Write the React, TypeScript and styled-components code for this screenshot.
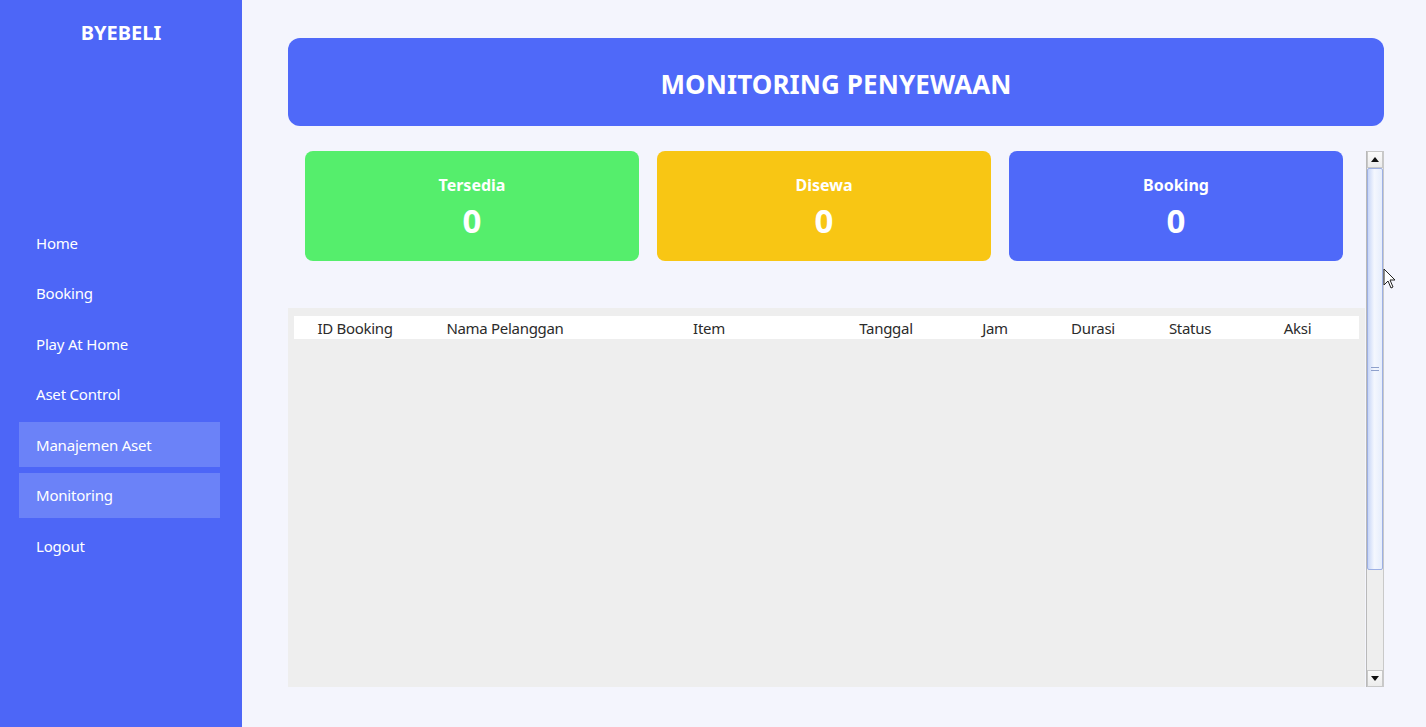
import React from "react";
import styled, { createGlobalStyle } from "styled-components";

const Global = createGlobalStyle`
  html, body { margin: 0; padding: 0; background: #f4f5fd; }
  body { font-family: "Noto Sans", "Open Sans", sans-serif; }
  * { box-sizing: border-box; }
`;

const Shell = styled.div`
  display: flex;
  width: 1426px;
  height: 727px;
  overflow: hidden;
  position: relative;
  background: #f4f5fd;
`;

const Sidebar = styled.aside`
  width: 242px;
  flex: none;
  background: #4d66f7;
  display: flex;
  flex-direction: column;
  padding: 19px 22px 0 19px;
`;

const Brand = styled.div`
  color: #fff;
  font-weight: 700;
  font-size: 20px;
  text-align: center;
  line-height: 28px;
  padding-left: 3px;
  margin-bottom: 173px;
`;

const Menu = styled.nav`
  display: flex;
  flex-direction: column;
  gap: 5.6px;
`;

const MenuItem = styled.div<{ $active?: boolean }>`
  height: 45px;
  display: flex;
  align-items: center;
  padding-left: 17px;
  color: #fff;
  font-size: 15px;
  letter-spacing: -0.2px;
  background: ${(p) => (p.$active ? "#6b82f8" : "transparent")};
`;

const Main = styled.main`
  flex: 1;
  display: flex;
  flex-direction: column;
  padding: 38px 42px 0 46px;
`;

const Header = styled.header`
  height: 88px;
  border-radius: 12px;
  background: #4f69f9;
  display: flex;
  align-items: center;
  justify-content: center;
  padding-top: 4px;
  color: #fff;
  font-weight: 700;
  font-size: 26px;
  letter-spacing: 0.1px;
`;

const ScrollPane = styled.div`
  margin-top: 25px;
  display: flex;
  height: 536px;
`;

const Content = styled.div`
  width: 1077px;
  display: flex;
  flex-direction: column;
`;

const Cards = styled.div`
  display: grid;
  grid-template-columns: repeat(3, 334px);
  gap: 18px;
  padding-left: 17px;
`;

const Card = styled.div<{ $bg: string }>`
  height: 110px;
  border-radius: 8px;
  background: ${(p) => p.$bg};
  color: #fff;
  display: flex;
  flex-direction: column;
  align-items: center;
  padding-top: 22px;
`;

const CardLabel = styled.div`
  font-weight: 700;
  font-size: 16px;
  line-height: 24px;
`;

const CardValue = styled.div`
  font-weight: 700;
  font-size: 33px;
  line-height: 40px;
  margin-top: 4px;
`;

const TableBox = styled.div`
  margin-top: 47px;
  flex: 1;
  background: #eeeeee;
  padding: 8px 6px;
`;

const HeadRow = styled.div`
  height: 23px;
  background: #fff;
  display: grid;
  grid-template-columns: 122px 178px 230px 124px 94px 102px 92px 123px;
`;

const HeadCell = styled.div`
  display: flex;
  align-items: center;
  justify-content: center;
  font-size: 15px;
  color: #2b2b2b;
  letter-spacing: -0.3px;
`;

const ScrollBar = styled.div`
  width: 18px;
  margin-left: 1px;
  display: flex;
  flex-direction: column;
  background: #eeeeee;
  border-left: 1px solid #b9b9b9;
  border-right: 1px solid #c9c9c9;
`;

const ArrowBtn = styled.div`
  height: 17px;
  flex: none;
  display: flex;
  align-items: center;
  justify-content: center;
  background: linear-gradient(#fbfbfb, #ececec);
  border: 1px solid #c8c8c8;
`;

const Thumb = styled.div`
  height: 402px;
  flex: none;
  background: linear-gradient(90deg, #c8d6f7, #f4f7fe 45%, #e6edfc);
  border: 1px solid #9db0e4;
  border-radius: 2px;
  display: flex;
  align-items: center;
  justify-content: center;
`;

const Grip = styled.div`
  width: 8px;
  height: 4px;
  border-top: 1px solid #8ea0cc;
  border-bottom: 1px solid #8ea0cc;
`;

const Track = styled.div`
  flex: 1;
`;

const Cursor = styled.svg`
  position: absolute;
  left: 1383px;
  top: 268px;
`;

const menu = ["Home", "Booking", "Play At Home", "Aset Control", "Manajemen Aset", "Monitoring", "Logout"];
const active = ["Manajemen Aset", "Monitoring"];
const cols = ["ID Booking", "Nama Pelanggan", "Item", "Tanggal", "Jam", "Durasi", "Status", "Aksi"];

export default function App() {
  return (
    <Shell>
      <Global />
      <Sidebar>
        <Brand>BYEBELI</Brand>
        <Menu>
          {menu.map((m) => (
            <MenuItem key={m} $active={active.includes(m)}>
              {m}
            </MenuItem>
          ))}
        </Menu>
      </Sidebar>
      <Main>
        <Header>MONITORING PENYEWAAN</Header>
        <ScrollPane>
          <Content>
            <Cards>
              <Card $bg="#55ee6c">
                <CardLabel>Tersedia</CardLabel>
                <CardValue>0</CardValue>
              </Card>
              <Card $bg="#f8c614">
                <CardLabel>Disewa</CardLabel>
                <CardValue>0</CardValue>
              </Card>
              <Card $bg="#4f69f9">
                <CardLabel>Booking</CardLabel>
                <CardValue>0</CardValue>
              </Card>
            </Cards>
            <TableBox>
              <HeadRow>
                {cols.map((c) => (
                  <HeadCell key={c}>{c}</HeadCell>
                ))}
              </HeadRow>
            </TableBox>
          </Content>
          <ScrollBar>
            <ArrowBtn>
              <svg width="8" height="5" viewBox="0 0 8 5">
                <path d="M0 5 L4 0 L8 5 Z" fill="#111" />
              </svg>
            </ArrowBtn>
            <Thumb>
              <Grip />
            </Thumb>
            <Track />
            <ArrowBtn>
              <svg width="8" height="5" viewBox="0 0 8 5">
                <path d="M0 0 L4 5 L8 0 Z" fill="#111" />
              </svg>
            </ArrowBtn>
          </ScrollBar>
        </ScrollPane>
      </Main>
      <Cursor width="14" height="22" viewBox="0 0 14 22">
        <path d="M1 1 L1 17 L5 13 L8 20 L10 19 L7 12 L12 12 Z" fill="#fff" stroke="#222" strokeWidth="1" />
      </Cursor>
    </Shell>
  );
}
